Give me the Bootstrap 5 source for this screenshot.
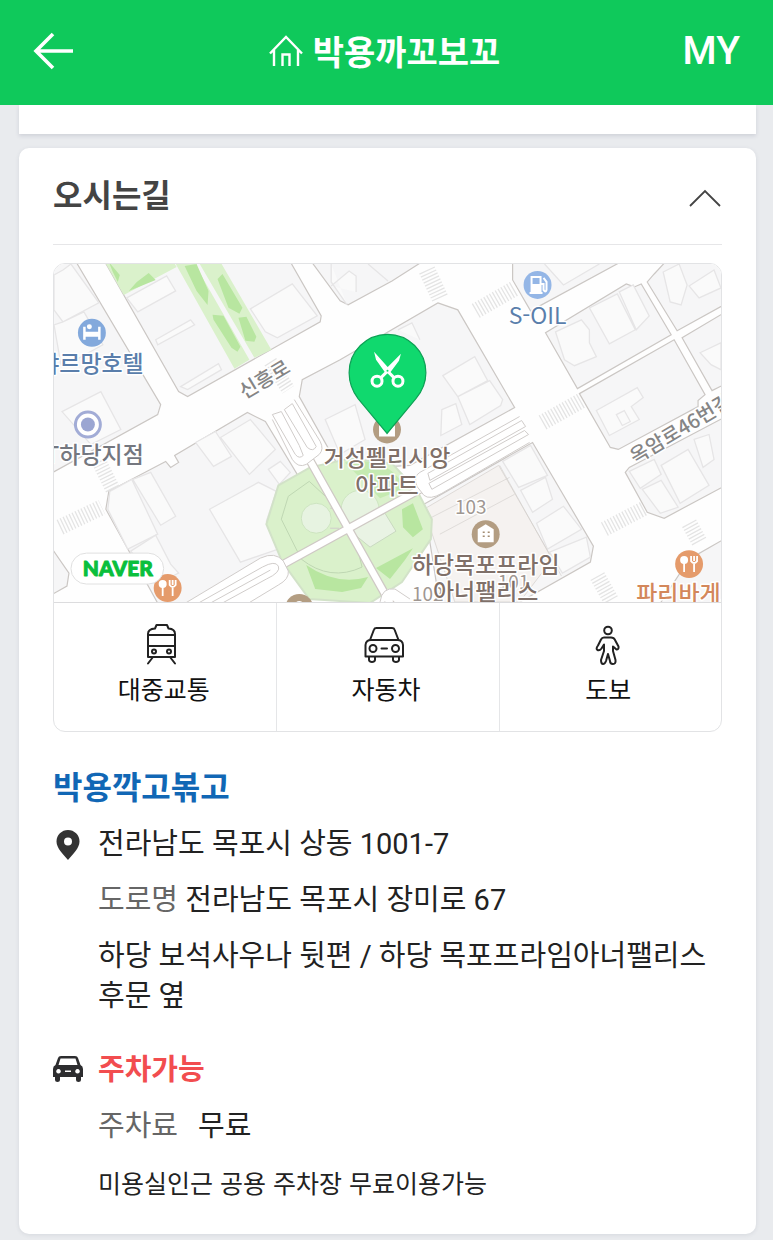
<!DOCTYPE html>
<html lang="ko">
<head>
<meta charset="utf-8">
<meta name="viewport" content="width=device-width, initial-scale=1">
<title>박용까꼬보꼬</title>
<link href="https://cdn.jsdelivr.net/npm/bootstrap@5.3.0/dist/css/bootstrap.min.css" rel="stylesheet">
<style>
  body { background: #e9ebee; color: #222; font-family: Roboto, "Noto Sans CJK KR", sans-serif; word-break: keep-all; }
  .topbar { background: #0fc95b; height: 105px; padding: 0 33px 4px 29px; z-index: 10; }
  .topbar .side { flex: 1 1 0; }
  .shop-title { font-family: "Noto Sans CJK KR", sans-serif; font-size: 34px; line-height: 48px; font-weight: 700; color: #fff; gap: 10px; }
  .my-link { font-size: 39px; line-height: 48px; font-weight: 500; }
  .page { padding: 0 17px 7px 19px; }
  .panel { background: #fff; border-radius: 10px; box-shadow: 0 1px 4px rgba(50, 55, 90, .1); }
  .prev-panel { height: 29px; border-radius: 0; box-shadow: 0 2px 4px rgba(50, 55, 90, .14); }
  .way { margin-top: 14px; padding: 0 34px 32px; }
  .way-head { height: 97px; border-bottom: 1px solid #e6e6e8; }
  .way-head h2 { font-size: 32px; line-height: 40px; color: #444; font-weight: 700; }
  .map-box { border: 1px solid #e2e3e5; border-radius: 12px; margin-top: 18px; }
  .modes > * + * { border-left: 1px solid #e5e6e8; }
  .modes { border-top: 1px solid #dcdcde; }
  .mode { height: 128px; font-size: 25px; line-height: 36px; color: #111; padding: 6px 4px 8px 0; gap: 8px; }
  .shop-name { font-size: 32px; line-height: 40px; font-weight: 700; color: #1167b5; margin: 36px 0 16px; }
  .info { grid-template-columns: 30px 1fr; column-gap: 15px; font-size: 29px; line-height: 40px; }
  .info + .info { margin-top: 34px; }
  .info > svg { margin-top: 5px; }
  .info .lines { gap: 16px; }
  .info .pair { gap: 20px; }
  .tag { color: #666; }
  .can-park { color: #f24d4f; font-weight: 700; }
  .note { font: 25px/40px "Noto Sans CJK KR", sans-serif; }
  .line-icon { fill: none; stroke: #222; stroke-width: 2; stroke-linejoin: round; stroke-linecap: round; }
  .blk { fill: #f6f6f7; stroke: #cbc7c4; stroke-width: 1.2; }
  .bld { fill: #fafafa; stroke: #e6e5e6; stroke-width: 1.3; }
  .edge { fill: none; stroke: #d0ccca; }
  .zebra line { stroke: #e4e4e4; stroke-dasharray: 1.3 2; }
  .map text { font-family: "Noto Sans CJK KR", sans-serif; font-size: 23px; paint-order: stroke; stroke: #fff; stroke-width: 3px; stroke-linejoin: round; }
  .map .naver { font: 900 21px Lato, sans-serif; fill: #0abf3c; stroke: #0abf3c; stroke-width: 1px; }
</style>
</head>
<body>
<header class="topbar sticky-top d-flex align-items-center">
  <div class="side">
    <button type="button" class="btn p-0 ps-1 border-0" aria-label="뒤로">
      <svg class="d-block" width="41" height="38" viewBox="0 0 41 38" fill="none" stroke="#fff" stroke-width="3.6"><path d="M20 2 3 19l17 17M3 19h37"/></svg>
    </button>
  </div>
  <h1 class="shop-title m-0 d-flex align-items-center">
    <svg width="34" height="32" viewBox="0 0 34 32" fill="none" stroke="#fff" stroke-width="2.4"><path d="M1 18.500 17 2l16 16.500M5 15v16M29 15v16M13.500 31V19.500h7V31"/></svg>
    <span>박용까꼬보꼬</span>
  </h1>
  <div class="side text-end"><a href="#" class="my-link text-white text-decoration-none">MY</a></div>
</header>

<main class="page">
  <section class="panel prev-panel"></section>
  <section class="panel way">
    <div class="way-head d-flex align-items-center justify-content-between">
      <h2 class="m-0">오시는길</h2>
      <button type="button" class="btn p-0 pt-1 border-0" data-bs-toggle="collapse" data-bs-target="#way" aria-expanded="true" aria-controls="way" aria-label="접기">
        <svg class="d-block" width="34" height="18" viewBox="0 0 34 18" fill="none" stroke="#444" stroke-width="1.800"><path d="M2 17 17 2l15 15"/></svg>
      </button>
    </div>

    <div id="way" class="collapse show">
      <div class="map-box overflow-hidden">
        <svg class="map d-block w-100" viewBox="53 264 669 339" role="img" aria-label="지도">
          <rect x="53" y="264" width="669" height="339" fill="#fefefe"/>
          <!-- city blocks -->
          <g class="blk">
            <path d="M50 260H74L160 405 157 415 50 474Z"/>
            <path d="M103 260 178 392 187 397 320 322 321 316 289 260Z"/>
            <path d="M310 260 340 301 348 305 392 281 425 260Z"/>
            <path d="M438 303 458 310 515 408 410 466 340 470 299 397 302 380 340 360Z"/>
            <path d="M513 260V280L531 311 625 260Z"/>
            <path d="M546 333 578 389 672 335 642 284 635 287 627 284Z"/>
            <path d="M648 282 678 331 725 305V260H668L655 274Z"/>
            <path d="M580 394 675 340 706 395 699 401V407L619 450 611 448Z"/>
            <path d="M683 338 713 391 725 385V313Z"/>
            <path d="M626 473 648 513 665 519 725 487V418L630 468Z"/>
            <path d="M533 443 594 547 591 563 515 606H440L424 505Z"/>
            <path d="M158 606 105 510 108 492 165 462 170 468 178 463 174 456 247 413 265 422 300 480 290 560 200 606Z"/>
            <path d="M50 548 68 574 66 587 50 596Z"/>
            <path d="M690 560 725 540V606H660Z"/>
          </g>
          <!-- buildings -->
          <g class="bld">
            <path d="M53 275 62 270 70 264 98 303 62 322 53 310ZM53 325 62 322 83 312 102 345 75 360 60 365ZM61 412 100 392 120 430 90 445Z"/>
            <path d="M126 298 166 276 175 291 137 312ZM155 340 190 320 194 325 157 345ZM180 387 218 364 221 370 187 390ZM250 309 292 284 317 316 277 338 265 332Z"/>
            <path d="M331 286 349 271 356 276V292M331 264V282L347 305M388 281 368 264"/>
            <path d="M443 376 475 357 488 381 458 397ZM458 397 490 381 503 400 501 406 470 425ZM442 410 456 404 462 425 441 436ZM398 330 412 323 420 340"/>
            <path d="M556 332 582 320 590 330V343L597 357 575 366 565 360ZM590 308 618 294 636 330 610 344ZM620 292 634 285 650 316 637 330ZM545 264 564 285 600 264"/>
            <path d="M664 272 680 264 688 285 682 305 671 302ZM690 286 715 270 722 288 700 298ZM597 411 638 388 644 398 632 407 640 420 610 436ZM617 415 625 411 631 422 623 426ZM701 353 722 343V370L712 365Z"/>
            <path d="M630 472 655 460 662 475 641 489ZM643 490 662 481 679 508 661 514ZM662 466 689 450 710 486 681 504ZM695 440 710 435 715 460 704 468Z"/>
            <path d="M503 462 531 446 548 476 519 488ZM521 491 546 478 553 500 533 513ZM537 524 564 507 582 530 548 550ZM550 553 587 538 591 558 563 574Z"/>
            <path d="M107 510 109 492 131 480 157 535 127 550ZM132 480 150 473 175 517 160 526ZM209 510 258 483 276 492 266 522 278 550 240 563ZM195 443 215 432 231 457 213 467ZM220 438 250 420 275 450 249 475ZM268 470 280 462 290 473 279 485Z"/>
            <path d="M130 552 155 536 170 565 178 574 160 583 145 570ZM325 420 355 405 365 440 340 455Z"/>
          </g>
          <!-- apartment lot -->
          <path d="M424 510 499 466 553 560 520 603H455Z" fill="#f5f2f0" stroke="#dedad7"/>
          <path d="M440 535 515 495M430 519 510 478M500 466 562 577" class="edge" opacity=".6"/>
          <!-- parks and green strips -->
          <g fill="#daf1cb">
            <path d="M104 262 123 295 176 267 173 262ZM174 262 234 369 249 360 193 262ZM198 262 254 358 271 350 220 262Z"/>
            <path d="M310 468 278 486 266 525 282 563 309 600 370 604 402 583 431 540 432 520 417 491 392 464 350 459Z" stroke="#d2e2c8" stroke-width="2"/>
          </g>
          <g fill="#b8e6a0">
            <path d="M108 262 119 275 117 282 112 272ZM128 291 136 282 148 273 155 280ZM184 266 196 264 208 291 207 305 196 291ZM213 320 212 315 223 316 240 347 237 352 231 348ZM217 279 222 274 242 308 239 314 228 308ZM238 318 246 317 256 337 254 342 245 341Z"/>
            <path d="M306 566Q336 587 368 578L361 589 342 593 315 590ZM376 569 413 549 405 561 390 580ZM402 510 413 504 423 530 413 538 403 528Z"/>
            <path d="M345 463Q378 458 394 474L408 488 380 499Z" opacity=".6"/>
          </g>
          <path d="M309 482 288 497 281 520 301 560Q330 583 362 568L350 520Z" fill="none" stroke="#bfd7b3"/>
          <circle cx="316" cy="519" r="15" fill="#e7f3e1" stroke="#cde4c0"/>
          <circle cx="360" cy="510" r="19" fill="#e7f3e1" stroke="#cde4c0"/>
          <path d="M330 509h9M330 529h9" class="edge"/>
          <path d="M348 530 385 514 396 532 370 548Z" fill="#e9f3e4" stroke="#c9d9c0"/>
          <!-- inner roads -->
          <g fill="none" stroke-linecap="round">
            <path d="M308 458 390 604M285 564 420 490" stroke="#cfc9c5" stroke-width="9"/>
            <path d="M308 458 390 604M285 564 420 490" stroke="#fff" stroke-width="6.500"/>
          </g>
          <g class="edge">
            <path d="M272 420 292 460Q298 469 306 465L319 455Q324 450 320 442L294 400M185 604 260 559Q275 552 283 562L288 572Q289 580 278 586L245 606M520 417 420 473Q413 477 417 487L424 496Q430 501 442 494L530 443" fill="#fff"/>
            <path d="M272 415 295 455Q299 460 303 456L299 446 281 412ZM284 410 307 448Q313 453 316 447L292 404Z"/>
            <path d="M198 604 262 568Q275 561 278 567T266 580L222 604M210 604 270 571"/>
            <path d="M522 421 428 474 430 481 526 427ZM525 431 429 484 432 490 529 435Z"/>
            <path d="M380 603Q382 588 395 590L410 600" fill="#fff"/>
          </g>
          <!-- crosswalks -->
          <g class="zebra">
            <line x1="427" y1="270" x2="441" y2="300" stroke-width="17"/>
            <line x1="476" y1="311" x2="516" y2="288" stroke-width="16"/>
            <line x1="543" y1="423" x2="582" y2="401" stroke-width="16"/>
            <line x1="605" y1="530" x2="645" y2="509" stroke-width="15"/>
            <line x1="690" y1="524" x2="701" y2="544" stroke-width="16"/>
            <line x1="598" y1="577" x2="612" y2="602" stroke-width="16"/>
            <line x1="59" y1="528" x2="101" y2="508" stroke-width="16"/>
            <line x1="98" y1="462" x2="112" y2="490" stroke-width="15"/>
            <line x1="270" y1="362" x2="288" y2="390" stroke-width="14"/>
          </g>
          <!-- place markers -->
          <g>
            <circle cx="91" cy="333" r="14" fill="#83a9dc"/>
            <path d="M83.500 327v13M98.500 327v13" stroke="#fff" stroke-width="2.500" fill="none"/><path d="M83 332h16v5H83z" fill="#fff"/><circle cx="88.500" cy="327" r="2.500" fill="#fff"/>
            <circle cx="87" cy="425" r="12.500" fill="#fff" stroke="#a2acd6" stroke-width="3"/><circle cx="87" cy="425" r="7" fill="#9ba6d2"/>
            <circle cx="538" cy="285" r="14" fill="#94b6e6"/>
            <path d="M532 277h9v16h-9zM530 293h13M541 284h3v6q2 3 3 0v-8l-3-4" stroke="#fff" stroke-width="2" fill="none"/><path d="M532 284h9v9h-9z" fill="#fff"/>
            <circle cx="387" cy="430" r="14" fill="#b39d82"/><path d="M379 426h16v11h-16z" fill="#fff"/>
            <circle cx="486" cy="535" r="14" fill="#b39d82"/><path d="M478 530 486 525 494 530V543H478Z" fill="#fff"/><path d="M483 533h2M488 533h2M483 537h2M488 537h2" stroke="#a28b71" stroke-width="1.500"/>
            <circle cx="299" cy="609" r="14" fill="#b39d82"/><circle cx="299" cy="607" r="5" fill="#fff"/>
            <g id="food"><circle cx="690" cy="565" r="14" fill="#e59b6b"/><circle cx="685" cy="561" r="4" fill="#fff"/><path d="M685 563v10M695 563v10M692 557v5q3 4 6 0v-5M695 557v5" stroke="#fff" stroke-width="1.800" fill="none"/></g>
            <use href="#food" x="-523" y="24"/>
          </g>
          <!-- labels -->
          <g font-weight="500">
            <g fill="#5a7eab">
              <text x="143" y="372" text-anchor="end">샤르망호텔</text>
              <text x="538" y="324" text-anchor="middle" font-weight="400">S-OIL</text>
            </g>
            <text x="143" y="464" text-anchor="end" fill="#74777f">T하당지점</text>
            <g fill="#7f7069" text-anchor="middle">
              <text x="387" y="467">거성펠리시앙</text>
              <text x="387" y="495">아파트</text>
            </g>
            <g fill="#a09792" font-weight="400">
              <text style="font-size:19px" x="471" y="515" text-anchor="middle">103</text>
              <text style="font-size:19px" x="412" y="602">102</text>
              <text style="font-size:19px" x="498" y="590">101</text>
            </g>
            <g fill="#7f7069" text-anchor="middle">
              <text x="486" y="574">하당목포프라임</text>
              <text x="486" y="601">아너팰리스</text>
            </g>
            <text x="637" y="603" fill="#d3875b">파리바게뜨</text>
            <g fill="#858585">
              <text style="font-size:20px" transform="translate(244 400) rotate(-31)">신흥로</text>
              <text style="font-size:20px" transform="translate(636 465) rotate(-31)">옥암로46번길</text>
            </g>
          </g>
          <rect x="70" y="554" width="93" height="31" rx="15.500" fill="#fff" stroke="#e0e0e0"/>
          <text class="naver" x="117" y="577" text-anchor="middle">NAVER</text>
          <!-- shop pin -->
          <path d="M387 434 358 399Q349 387 349 373A38.500 38.500 0 0 1 426 373Q426 387 416 399Z" fill="#10d96e" stroke="#0da155" stroke-width="1.200"/>
          <g stroke="#fff" fill="none" stroke-width="3">
            <circle cx="377" cy="381.500" r="5"/><circle cx="398" cy="381.500" r="5"/>
            <path d="M381 378 388 371M394 378 387 371"/>
            <path d="M374 352 391 371 386 374 376 360ZM401 354 399 361 390 373 386 369Z" fill="#fff" stroke="none"/>
          </g>
          <circle cx="387.500" cy="371" r="1" fill="#10d96e"/>
        </svg>
        <div class="modes row g-0">
          <button type="button" class="mode col btn rounded-0 border-top-0 border-end-0 border-bottom-0 d-flex flex-column align-items-center justify-content-center">
            <svg class="line-icon me-1" width="34" height="42" viewBox="0 0 34 42"><path d="M3 34V11Q3 6 10 5.500L11.500 2H22L23.500 5.500Q30 6 30 11V34ZM3 12H30M3 23H30M8 34 3 40.500M25 34 30 40.500"/><circle cx="9" cy="28.500" r="2"/><circle cx="24" cy="28.500" r="2"/></svg>
            대중교통
          </button>
          <button type="button" class="mode col btn rounded-0 border-top-0 border-end-0 border-bottom-0 d-flex flex-column align-items-center justify-content-center">
            <svg class="line-icon me-1" width="42" height="42" viewBox="0 0 42 42"><path d="M7 17 11 6.500Q11.500 5 13.500 5H29Q31 5 31.500 6.500L35.500 17M2.500 33.500V22Q3 17 8 17H34.500Q39.500 17 40 22V33.500ZM6 33.500V37Q6.500 39 9 39T12 37V33.500M30 33.500V37Q30.500 39 33 39T36 37V33.500M18.500 25.500H24"/><circle cx="10" cy="25.500" r="3.500"/><circle cx="32.500" cy="25.500" r="3.500"/></svg>
            자동차
          </button>
          <button type="button" class="mode col btn rounded-0 border-top-0 border-end-0 border-bottom-0 d-flex flex-column align-items-center justify-content-center">
            <svg class="line-icon" width="30" height="42" viewBox="0 0 30 42"><circle cx="15" cy="7.500" r="3.800"/><path d="M11 14.500H18Q21 14.500 22 17L25.500 23.500Q26 26.500 23.500 26.500L20 23.500V28L22.500 37Q23 41 20 41T17 38L15 31 13 38Q12 41 10 41T8 37L11 28V21.500L8.500 25.500Q6.500 28 4.500 27T5 22.500L8 16.500Q9 14.500 11 14.500Z"/></svg>
            도보
          </button>
        </div>
      </div>

      <h3 class="shop-name"><a href="#" class="text-reset text-decoration-none">박용깍고볶고</a></h3>

      <div class="info d-grid">
        <svg class="mx-auto" width="24" height="32" viewBox="0 0 24 32"><path fill="#333" fill-rule="evenodd" d="M12 1A11.500 11.500 0 0 0 .5 12.500C.5 19 7 25 12 31 17 25 23.500 19 23.500 12.500A11.500 11.500 0 0 0 12 1ZM12 8.500a4 4 0 1 1 0 8 4 4 0 0 1 0-8Z"/></svg>
        <div class="lines d-flex flex-column">
          <div>전라남도 목포시 상동 1001-7</div>
          <div><span class="tag">도로명</span> 전라남도 목포시 장미로 67</div>
          <div>하당 보석사우나 뒷편 / 하당 목포프라임아너팰리스 후문 옆</div>
        </div>
      </div>

      <div class="info d-grid">
        <svg width="30" height="32" viewBox="0 0 30 32"><path fill="#2d2d2f" fill-rule="evenodd" d="M5 3Q5.500 1 8 1H22Q24.500 1 25 3L27.500 10Q30 11 30 14V22H28V25Q28 27 25.500 27T23 25V22H7V25Q7 27 4.500 27T2 25V22H0V14Q0 11 2.500 10ZM7.500 3.500 5.500 10H24.500L22.500 3.500ZM5.500 14a2.300 2.300 0 1 0 .01 0ZM24.500 14a2.300 2.300 0 1 0 .01 0ZM12 15.500V17H18V15.500Z"/></svg>
        <div class="lines d-flex flex-column">
          <div class="can-park">주차가능</div>
          <div class="pair d-flex"><span class="tag">주차료</span><span>무료</span></div>
          <div class="note">미용실인근 공용 주차장 무료이용가능</div>
        </div>
      </div>
    </div>
  </section>
</main>
<script src="https://cdn.jsdelivr.net/npm/bootstrap@5.3.0/dist/js/bootstrap.bundle.min.js"></script>
</body>
</html>
